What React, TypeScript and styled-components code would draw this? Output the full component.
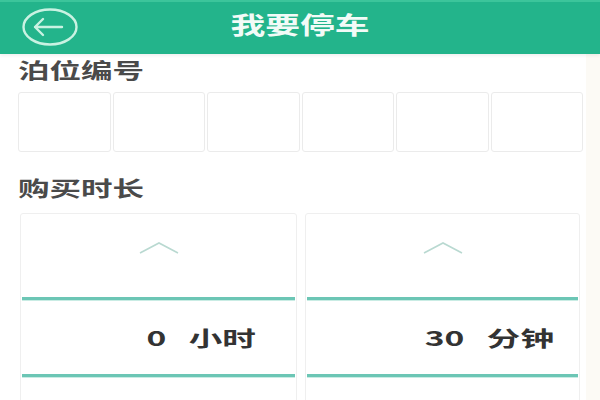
import React from "react";
import styled, { createGlobalStyle } from "styled-components";

const GlobalStyle = createGlobalStyle`
  html, body {
    margin: 0;
    padding: 0;
    background: #ffffff;
  }
  body {
    font-family: "Noto Sans CJK SC", "Noto Sans", sans-serif;
    color: #3a3a3a;
  }
`;

const Page = styled.div`
  width: 600px;
  height: 400px;
  overflow: hidden;
  background: linear-gradient(to right, #ffffff 586px, #fcfaf5 586px);
`;

const Header = styled.header`
  position: relative;
  height: 54px;
  background: #23b48b;
  border-top: 2px solid #3cc59b;
  box-sizing: border-box;
  display: flex;
  align-items: center;
  justify-content: center;
  box-shadow: 0 2px 3px rgba(0, 0, 0, 0.06);
`;

const BackButton = styled.button`
  position: absolute;
  left: 21px;
  top: 5px;
  width: 58px;
  height: 40px;
  padding: 0;
  border: 0;
  background: transparent;
  display: flex;
  align-items: center;
  justify-content: center;
`;

const Title = styled.h1`
  margin: 0;
  font-size: 24px;
  font-weight: 700;
  color: #f2fbf7;
  line-height: 1;
  transform: scaleX(1.45);
  transform-origin: center;
  margin-top: -8px;
`;

const Content = styled.main`
  padding: 0 17px 0 18px;
`;

const Label = styled.div<{ $top: number }>`
  margin-top: ${(p) => p.$top}px;
  font-size: 21px;
  font-weight: 700;
  line-height: 21px;
  color: #4a4a4a;
  transform: scaleX(1.5);
  transform-origin: left center;
`;

const CellRow = styled.div`
  margin-top: 12px;
  display: grid;
  grid-template-columns: repeat(6, 1fr);
  gap: 2px;
`;

const Cell = styled.div`
  height: 60px;
  border: 1.5px solid #ebebeb;
  border-radius: 3px;
  box-sizing: border-box;
  background: #fff;
`;

const PickerRow = styled.div`
  margin: 15px 3px 0 2px;
  display: grid;
  grid-template-columns: 277px 275px;
  gap: 8px;
`;

const PickerCard = styled.div`
  height: 200px;
  border: 1.5px solid #efefef;
  border-radius: 3px;
  box-sizing: border-box;
  padding: 0 1px;
`;

const ArrowArea = styled.div`
  height: 83px;
  display: flex;
  align-items: center;
  justify-content: center;
  padding-bottom: 16px;
  box-sizing: border-box;
`;

const Divider = styled.div`
  height: 3px;
  background: #6cc6b5;
  border-bottom: 1px solid #c9ece4;
`;

const ValueArea = styled.div<{ $shift: number }>`
  height: 73px;
  display: flex;
  align-items: center;
  justify-content: center;
  padding-left: ${(p) => p.$shift}px;
  box-sizing: border-box;
`;

const ValueText = styled.div`
  display: flex;
  align-items: center;
  font-size: 21px;
  font-weight: 700;
  color: #333333;
  line-height: 1;
  transform: scaleX(1.6);
  transform-origin: center;
`;

const Number = styled.span`
  margin-right: 14px;
`;

const BackIcon = () => (
  <svg width="58" height="40" viewBox="0 0 58 40" fill="none">
    <ellipse cx="29" cy="20" rx="26.5" ry="17.5" stroke="#c9f2e2" strokeWidth="2.4" />
    <path d="M14 20 H41 M22 12 L14 20 L22 28" stroke="#c9f2e2" strokeWidth="2.4" strokeLinecap="round" strokeLinejoin="round" />
  </svg>
);

const Chevron = () => (
  <svg width="40" height="13" viewBox="0 0 40 13" fill="none">
    <polyline points="1,12 20,2 39,12" stroke="#b9d9d1" strokeWidth="1.6" />
  </svg>
);

const pickers = [
  { value: "0", unit: "小时", shift: 86 },
  { value: "30", unit: "分钟", shift: 94 },
];

export default function App() {
  return (
    <>
      <GlobalStyle />
      <Page>
        <Header>
          <BackButton aria-label="返回">
            <BackIcon />
          </BackButton>
          <Title>我要停车</Title>
        </Header>
        <Content>
          <Label $top={5}>泊位编号</Label>
          <CellRow>
            {Array.from({ length: 6 }).map((_, i) => (
              <Cell key={i} />
            ))}
          </CellRow>
          <Label $top={25}>购买时长</Label>
          <PickerRow>
            {pickers.map((p) => (
              <PickerCard key={p.unit}>
                <ArrowArea>
                  <Chevron />
                </ArrowArea>
                <Divider />
                <ValueArea $shift={p.shift}>
                  <ValueText>
                    <Number>{p.value}</Number>
                    <span>{p.unit}</span>
                  </ValueText>
                </ValueArea>
                <Divider />
              </PickerCard>
            ))}
          </PickerRow>
        </Content>
      </Page>
    </>
  );
}
